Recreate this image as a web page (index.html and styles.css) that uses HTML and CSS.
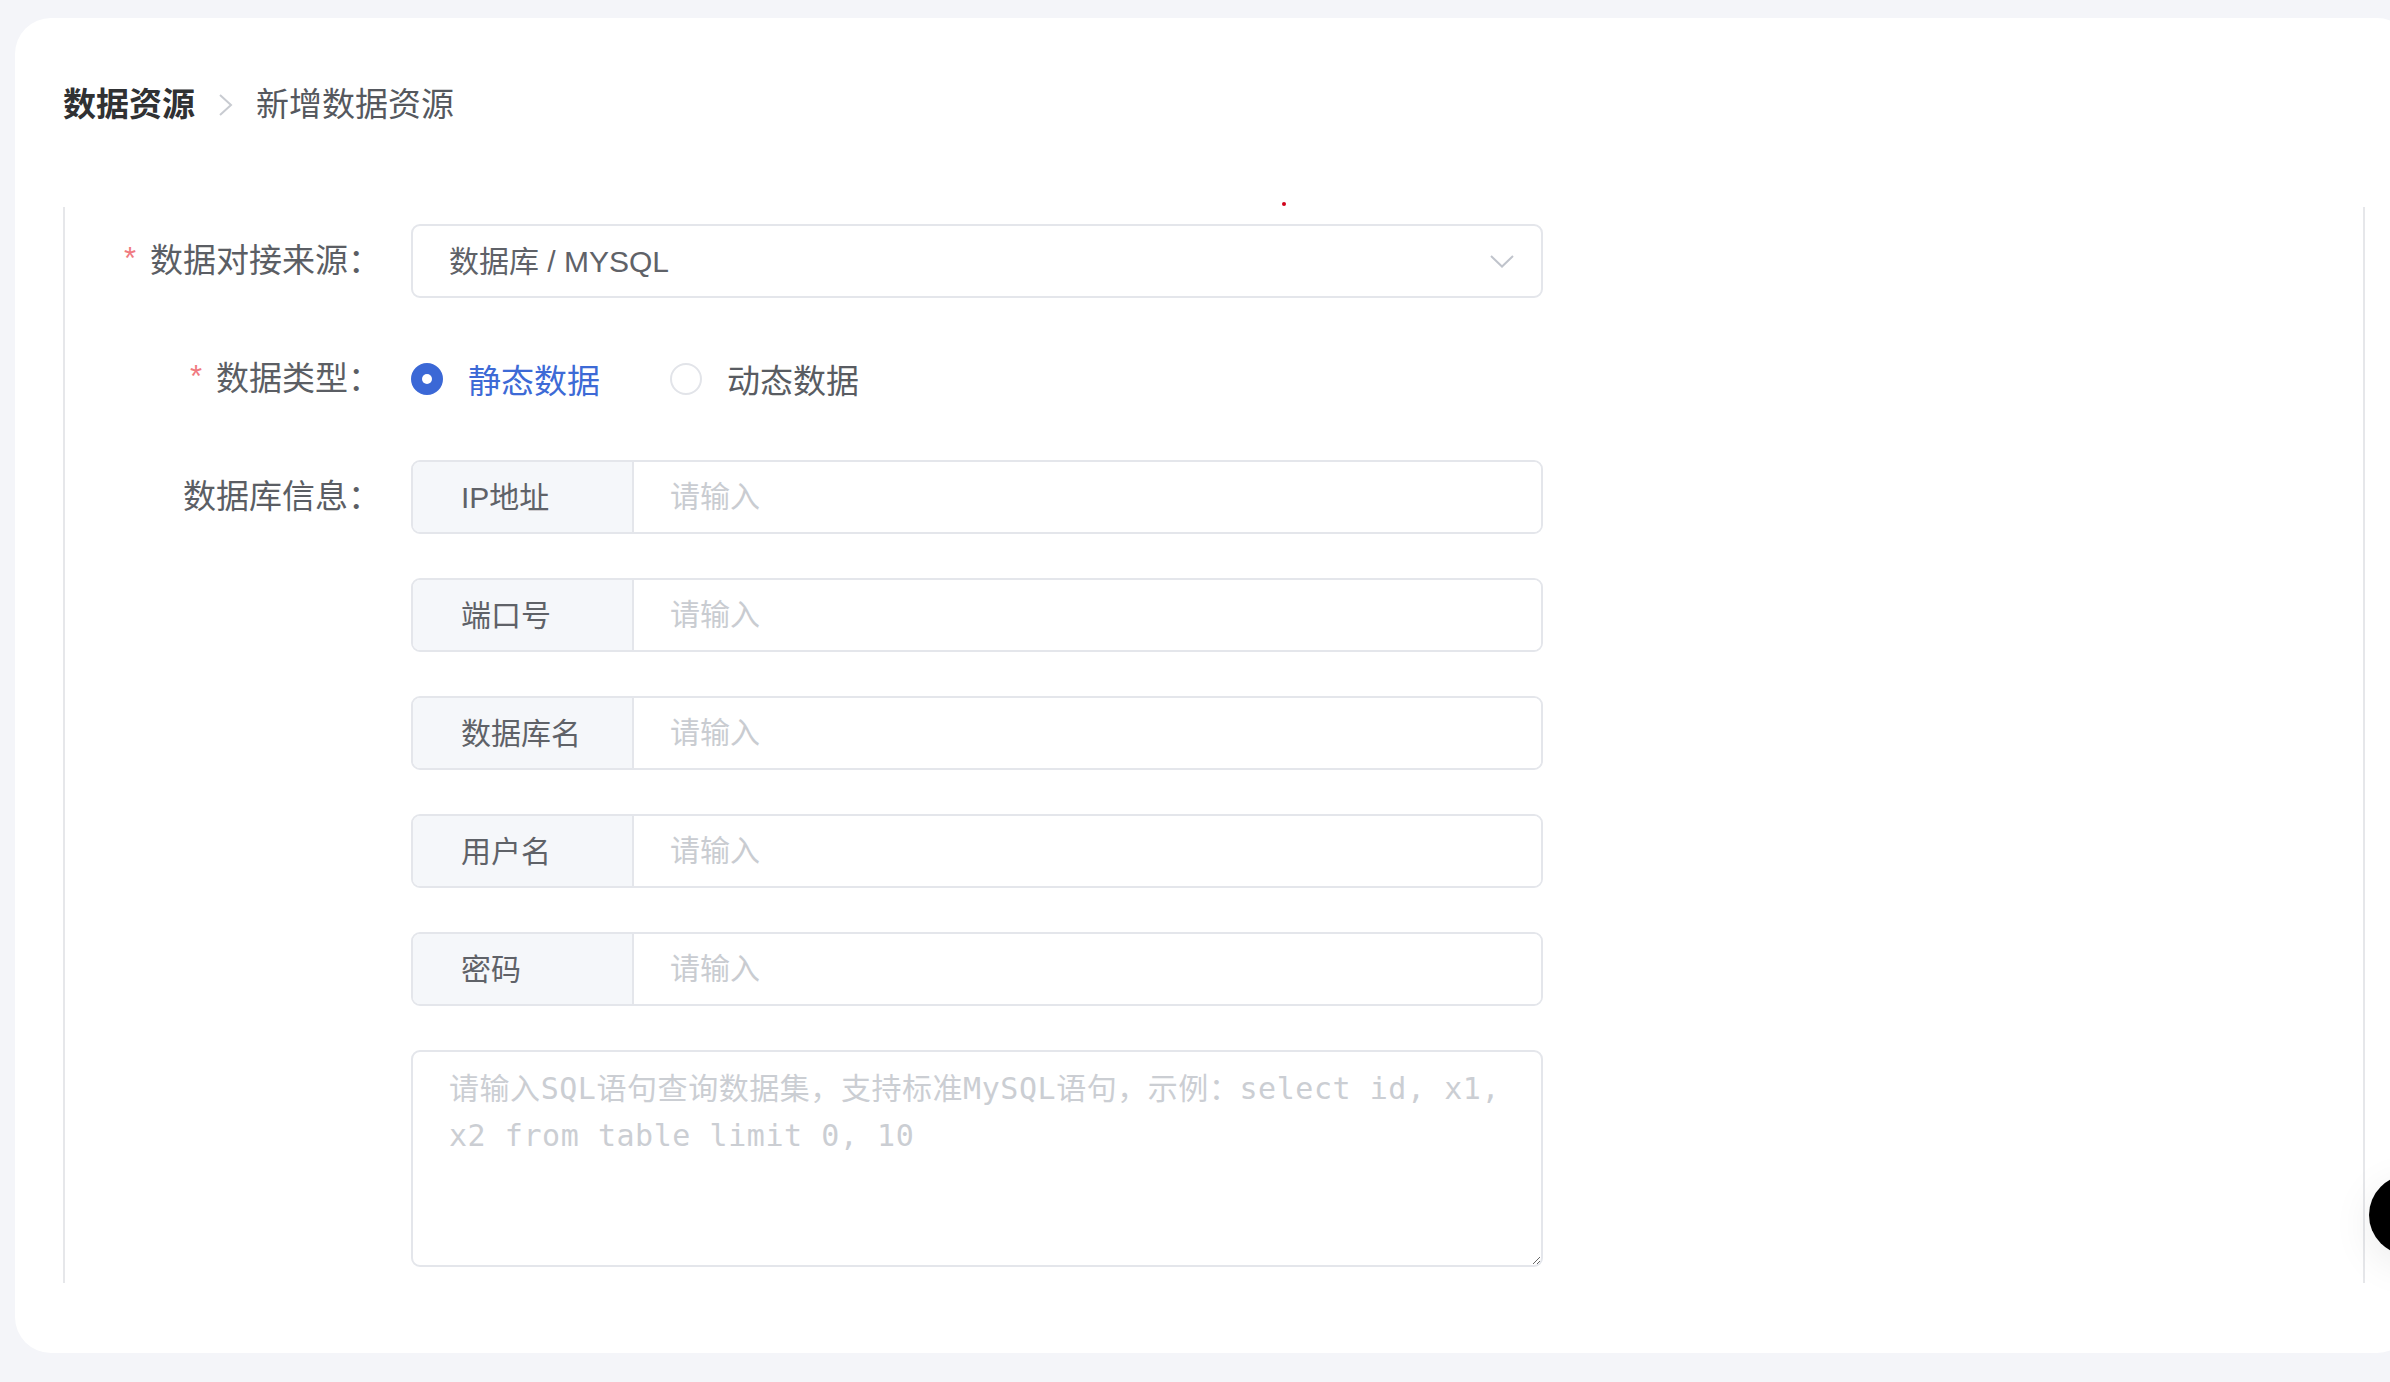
FILE: index.html
```html
<!DOCTYPE html>
<html lang="zh-CN">
<head>
<meta charset="utf-8">
<title>新增数据资源</title>
<link rel="stylesheet" href="styles.css">
</head>
<body>
<div class="card">
  <div class="breadcrumb">
    <span class="crumb crumb-root">数据资源</span>
    <svg class="crumb-sep" width="16" height="22" viewBox="0 0 16 22"><polyline points="2,1 13,11 2,21" fill="none" stroke="#c8cbd1" stroke-width="2"/></svg>
    <span class="crumb crumb-current">新增数据资源</span>
  </div>
  <div class="panel">
    <span class="red-dot"></span>
    <form class="form">
      <div class="item">
        <label class="label"><span class="star">*</span>数据对接来源：</label>
        <div class="select">
          <span class="select-value">数据库 / MYSQL</span>
          <svg class="chevron" width="24" height="13" viewBox="0 0 24 13"><polyline points="1,1 12,11.5 23,1" fill="none" stroke="#c0c4cc" stroke-width="2"/></svg>
        </div>
      </div>
      <div class="item">
        <label class="label"><span class="star">*</span>数据类型：</label>
        <div class="radios">
          <span class="radio radio-on"><span class="radio-dot"></span><span class="radio-text">静态数据</span></span>
          <span class="radio"><span class="radio-dot"></span><span class="radio-text">动态数据</span></span>
        </div>
      </div>
      <div class="item">
        <label class="label">数据库信息：</label>
        <div class="group"><span class="prepend">IP地址</span><input class="field" placeholder="请输入"></div>
      </div>
      <div class="item">
        <span class="label"></span>
        <div class="group"><span class="prepend">端口号</span><input class="field" placeholder="请输入"></div>
      </div>
      <div class="item">
        <span class="label"></span>
        <div class="group"><span class="prepend">数据库名</span><input class="field" placeholder="请输入"></div>
      </div>
      <div class="item">
        <span class="label"></span>
        <div class="group"><span class="prepend">用户名</span><input class="field" placeholder="请输入"></div>
      </div>
      <div class="item">
        <span class="label"></span>
        <div class="group"><span class="prepend">密码</span><input class="field" placeholder="请输入"></div>
      </div>
      <div class="item item-area">
        <span class="label"></span>
        <textarea class="sql" placeholder="请输入SQL语句查询数据集，支持标准MySQL语句，示例：select id, x1, x2 from table limit 0, 10"></textarea>
      </div>
    </form>
  </div>
</div>
<div class="fab"></div>
</body>
</html>
```

FILE: styles.css
```css
html, body {
  margin: 0;
  padding: 0;
}
body {
  width: 2390px;
  height: 1382px;
  overflow: hidden;
  background: #f4f5f9;
  font-family: "Liberation Sans", "Noto Sans CJK SC", sans-serif;
  position: relative;
}
.card {
  position: relative;
  margin: 18px 0 0 15px;
  width: 2398px;
  height: 1335px;
  box-sizing: border-box;
  padding: 63px 48px 0 48px;
  background: #ffffff;
  border-radius: 36px;
}
.breadcrumb {
  height: 48px;
  display: flex;
  align-items: center;
  font-size: 33px;
  line-height: 48px;
}
.crumb-root {
  color: #303133;
  font-weight: 700;
}
.crumb-sep {
  margin: 0 22px 0 23px;
}
.crumb-current {
  color: #55585e;
}
.panel {
  position: relative;
  margin-top: 78px;
  height: 1076px;
  box-sizing: border-box;
  border-left: 2px solid #e6e7ea;
  border-right: 2px solid #e6e7ea;
  padding-top: 17px;
}
.red-dot {
  position: absolute;
  left: 1217px;
  top: -5px;
  width: 4px;
  height: 4px;
  border-radius: 50%;
  background: #d0021b;
}
.form {
  display: flex;
  flex-direction: column;
  gap: 44px;
}
.item {
  display: flex;
  align-items: center;
  height: 74px;
}
.item-area {
  height: 217px;
  align-items: flex-start;
}
.label {
  width: 346px;
  flex: none;
  box-sizing: border-box;
  padding-right: 30px;
  text-align: right;
  font-size: 33px;
  color: #5b5e64;
  line-height: 74px;
}
.star {
  color: #f07a80;
  font-size: 31px;
  margin-right: 14px;
  position: relative;
  top: -3px;
}
.select {
  width: 1132px;
  height: 74px;
  box-sizing: border-box;
  border: 2px solid #e4e6eb;
  border-radius: 9px;
  display: flex;
  align-items: center;
  justify-content: space-between;
  padding: 0 27px 0 36px;
}
.select-value {
  font-size: 30px;
  color: #5f6268;
  position: relative;
  top: -2px;
}
.radios {
  display: flex;
  align-items: center;
  height: 74px;
}
.radio {
  display: flex;
  align-items: center;
  margin-right: 70px;
}
.radio-dot {
  width: 32px;
  height: 32px;
  box-sizing: border-box;
  border-radius: 50%;
  border: 2px solid #e2e4e9;
  background: #fff;
  margin-right: 25px;
  position: relative;
}
.radio-on .radio-dot {
  border-color: #3b68d6;
  background: #3b68d6;
}
.radio-on .radio-dot::after {
  content: "";
  position: absolute;
  left: 50%;
  top: 50%;
  width: 10px;
  height: 10px;
  margin: -5px 0 0 -5px;
  border-radius: 50%;
  background: #fff;
}
.radio-text {
  font-size: 33px;
  color: #595c62;
}
.radio-on .radio-text {
  color: #3d6ad6;
}
.group {
  width: 1132px;
  height: 74px;
  display: flex;
  box-sizing: border-box;
  border: 2px solid #e4e6eb;
  border-radius: 9px;
  overflow: hidden;
}
.prepend {
  width: 221px;
  flex: none;
  box-sizing: border-box;
  padding-left: 48px;
  background: #f5f7fa;
  border-right: 2px solid #e4e6eb;
  font-size: 30px;
  color: #5f6268;
  line-height: 72px;
}
.field {
  flex: 1;
  border: none;
  outline: none;
  padding: 0 0 0 36px;
  font-family: "Liberation Sans", "Noto Sans CJK SC", sans-serif;
  font-size: 30px;
  color: #5f6268;
  background: #fff;
}
.field::placeholder {
  color: #c9ccd1;
}
.sql {
  width: 1132px;
  height: 217px;
  box-sizing: border-box;
  border: 2px solid #e4e6eb;
  border-radius: 9px;
  padding: 13px 36px;
  font-family: "DejaVu Sans Mono", "Noto Sans CJK SC", monospace;
  font-size: 30px;
  letter-spacing: 0.55px;
  line-height: 47px;
  color: #5f6268;
  outline: none;
  resize: vertical;
}
.sql::placeholder {
  color: #cbced3;
}
.fab {
  position: absolute;
  left: 2369px;
  top: 1175px;
  width: 80px;
  height: 80px;
  border-radius: 50%;
  background: #000;
  box-shadow: 0 10px 40px rgba(0, 0, 0, 0.08);
}
```
